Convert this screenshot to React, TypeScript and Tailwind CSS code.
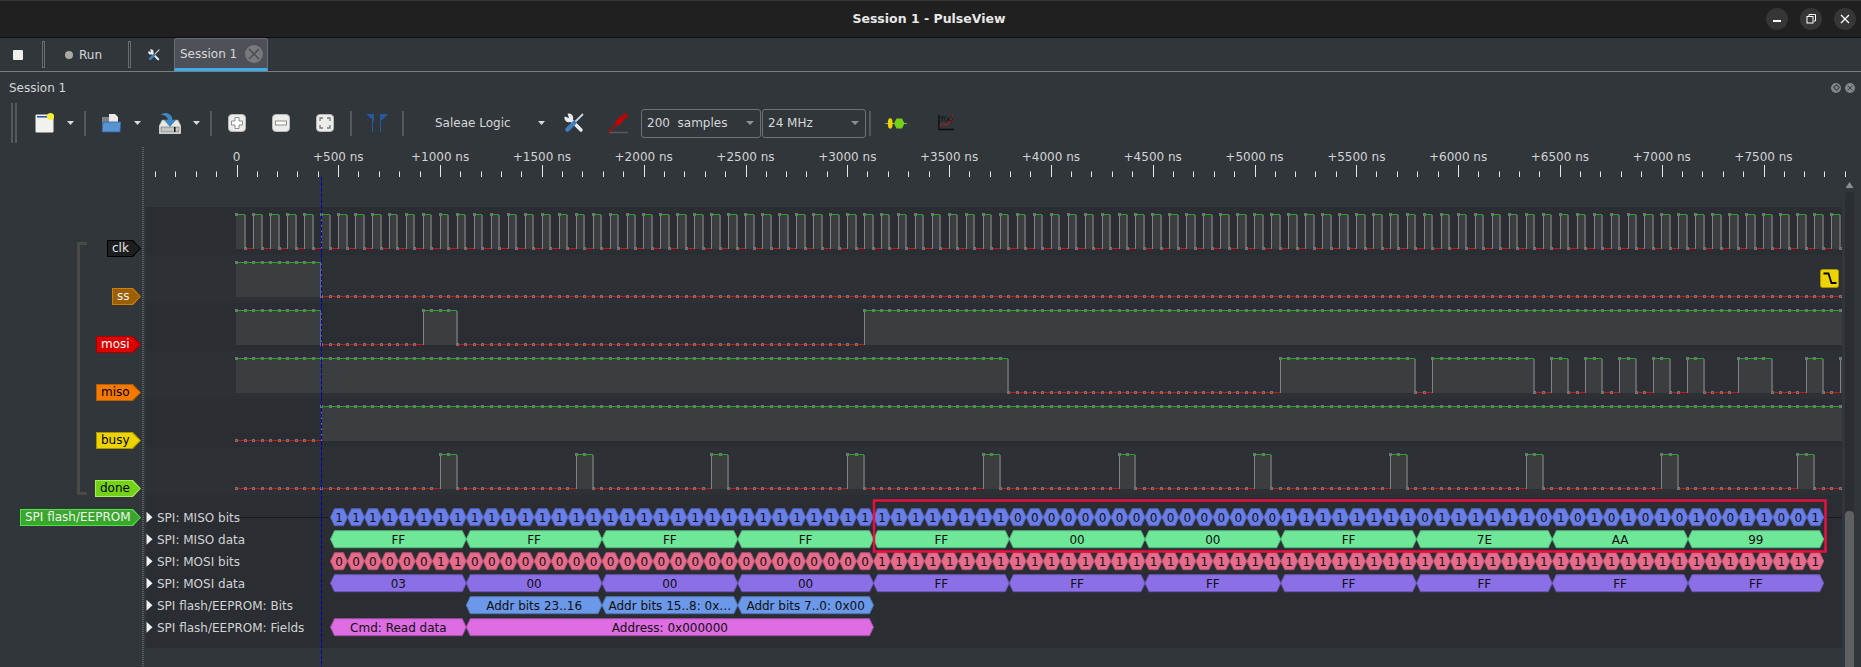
import React from 'react';

const SAMPLE = 8.483;
const X0 = 236.3;
const LAST = 189;
const LEFT = 146;
const RIGHT = 1842;

// each trace: first level and the samples where it flips
const pulses = (start: number, step: number, count: number, width: number) => {
  const out: number[] = [];
  for (let k = 0; k < count; k++) out.push(start + k * step, start + k * step + width);
  return out;
};

const traces: { high: number; start: boolean; flips: number[] }[] = [
  { high: 213.5, start: true, flips: Array.from({ length: 190 }, (_, i) => i + 1) },
  { high: 261.5, start: true, flips: [10] },
  { high: 309.5, start: true, flips: [10, 22, 26, 74] },
  { high: 357.5, start: true, flips: [91, 123, 139, 141, 153, 155, 157, 159, 161, 163, 165, 167, 169, 171, 173, 177, 181, 185, 187, 189] },
  { high: 405.5, start: false, flips: [10] },
  { high: 453.5, start: false, flips: pulses(24, 16, 11, 2) },
];

const sx = (i: number) => Math.min(Math.round(X0 + i * SAMPLE), RIGHT);

const Trace = ({ high, start, flips }: { high: number; start: boolean; flips: number[] }) => {
  const low = high + 34;
  const set = new Set(flips);
  let level = start;
  let green = '';
  let red = '';
  let rising = '';
  let falling = '';
  let fill = '';
  const dots: React.ReactNode[] = [];
  for (let i = 0; i <= LAST; i++) {
    if (set.has(i)) {
      level = !level;
      if (level) rising += `M${sx(i) + 0.5} ${high}V${low}`;
      else falling += `M${sx(i)} ${high}V${low}`;
    }
    const y = level ? high : low;
    const seg = `M${sx(i)} ${y}H${sx(i + 1)}`;
    if (level) {
      green += seg;
      fill += `M${sx(i)} ${high}H${sx(i + 1)}V${low}H${sx(i)}Z`;
    } else {
      red += seg;
    }
    dots.push(<rect key={i} x={sx(i) - 1} y={y - 1} width={2} height={2} fill="none" stroke="#727475" strokeWidth={1} />);
  }
  return (
    <g shapeRendering="crispEdges">
      <path d={fill} fill="#3a3e41" />
      <path d={green} stroke="#1fa81f" strokeWidth={1} fill="none" />
      <path d={red} stroke="#d01414" strokeWidth={1} fill="none" />
      <path d={rising} stroke="#808283" strokeWidth={1} fill="none" />
      <path d={falling} stroke="#636566" strokeWidth={2} fill="none" />
      {dots}
    </g>
  );
};

const BYTE = 135.75;
const START = 330.5;
const ROWS = [516.2, 538.2, 560.2, 582.2, 604.2, 626.2];

const Ann = ({ x, w, row, fill, stroke, text, inset = 4 }: { x: number; w: number; row: number; fill: string; stroke: string; text: string; inset?: number }) => {
  const y = ROWS[row];
  const pts = `${x},${y} ${x + inset},${y - 8.5} ${x + w - inset},${y - 8.5} ${x + w},${y} ${x + w - inset},${y + 8.5} ${x + inset},${y + 8.5}`;
  return (
    <g>
      <polygon points={pts} fill={fill} stroke={stroke} strokeWidth={1} />
      <text x={x + w / 2} y={y + 4.5} textAnchor="middle" fontSize={12} fill="#101010">{text}</text>
    </g>
  );
};

const misoBytes = ['FF', 'FF', 'FF', 'FF', 'FF', '00', '00', 'FF', '7E', 'AA', '99'];
const mosiBytes = ['03', '00', '00', '00', 'FF', 'FF', 'FF', 'FF', 'FF', 'FF', 'FF'];
const toBits = (hex: string) => parseInt(hex, 16).toString(2).padStart(8, '0').split('');

const rowNames = ['SPI: MISO bits', 'SPI: MISO data', 'SPI: MOSI bits', 'SPI: MOSI data', 'SPI flash/EEPROM: Bits', 'SPI flash/EEPROM: Fields'];

const TraceView = () => {
  const majors = Array.from({ length: 16 }, (_, k) => 236.5 + k * 101.8);
  const minors: number[] = [];
  for (let t = -4; t < 80; t++) if (t % 5 !== 0) minors.push(Math.round(236.3 + t * 20.36) + 0.5);
  return (
    <svg width={RIGHT - LEFT} height={521} viewBox={`${LEFT} 146 ${RIGHT - LEFT} 521`} className="block shrink-0 overflow-visible">
      {/* ruler */}
      {majors.map((x, k) => (
        <g key={k}>
          <text x={x} y={160} textAnchor="middle" fontSize={12} fill="#d2d3d4">{k === 0 ? '0' : `+${k * 500} ns`}</text>
          <path d={`M${Math.round(x) + 0.5} 164V176`} stroke="#e4e5e5" strokeWidth={1} />
        </g>
      ))}
      {minors.map((x) => <path key={x} d={`M${x} 170.5V176`} stroke="#e4e5e5" strokeWidth={1} />)}

      {/* row bands */}
      <rect x={LEFT} y={206} width={RIGHT - LEFT} height={441} fill="#2a2d32" />
      {[254, 350, 446].map((y) => <rect key={y} x={LEFT} y={y} width={RIGHT - LEFT} height={48} fill="#2d3136" />)}

      {traces.map((t) => <Trace key={t.high} {...t} />)}

      {/* decoder rows */}
      <path d={`M240 516.5H330M1824 516.5H${RIGHT}`} stroke="#1b1c1e" strokeWidth={1} />
      {rowNames.map((name, r) => (
        <g key={name}>
          <polygon points={`146.5,${ROWS[r] - 5.5} 152.5,${ROWS[r]} 146.5,${ROWS[r] + 5.5}`} fill="#f2f2f2" />
          <text x={157} y={ROWS[r] + 4.5} fontSize={12} fill="#d2d3d4">{name}</text>
        </g>
      ))}
      {misoBytes.map((b, i) => (
        <g key={i}>
          {toBits(b).map((bit, j) => (
            <Ann key={j} x={START + i * BYTE + (j * BYTE) / 8} w={BYTE / 8} row={0} fill="#6a7ee8" stroke="#5263b8" text={bit} />
          ))}
          <Ann x={START + i * BYTE} w={BYTE} row={1} fill="#6fe799" stroke="#55b478" text={b} />
        </g>
      ))}
      {mosiBytes.map((b, i) => (
        <g key={i}>
          {toBits(b).map((bit, j) => (
            <Ann key={j} x={START + i * BYTE + (j * BYTE) / 8} w={BYTE / 8} row={2} fill="#e76b8d" stroke="#b5526d" text={bit} />
          ))}
          <Ann x={START + i * BYTE} w={BYTE} row={3} fill="#8b6fe6" stroke="#6b55b4" text={b} />
        </g>
      ))}
      <Ann x={START + BYTE} w={BYTE} row={4} fill="#6b98e8" stroke="#5276b6" text="Addr bits 23..16" />
      <Ann x={START + 2 * BYTE} w={BYTE} row={4} fill="#6b98e8" stroke="#5276b6" text="Addr bits 15..8: 0x…" />
      <Ann x={START + 3 * BYTE} w={BYTE} row={4} fill="#6b98e8" stroke="#5276b6" text="Addr bits 7..0: 0x00" />
      <Ann x={START} w={BYTE} row={5} fill="#de6ce2" stroke="#a050a8" text="Cmd: Read data" />
      <Ann x={START + BYTE} w={BYTE * 3} row={5} fill="#de6ce2" stroke="#a050a8" text="Address: 0x000000" />

      {/* selection box */}
      <rect x={874} y={499.5} width={951.5} height={51} fill="none" stroke="#e8103f" strokeWidth={2.5} />

      {/* cursor */}
      <path d="M321.5 176V666" stroke="#0000c4" strokeWidth={1} strokeDasharray="4 1.5" />

      {/* trigger marker */}
      <rect x={1820.5} y={268.5} width={18} height={18} rx={2} fill="#edd400" stroke="#a89600" />
      <path d="M1823.5 272.5h5l3 9.5h5" stroke="#000" strokeWidth={1.8} fill="none" />
    </svg>
  );
};

const ChannelTag = ({ name, border, bg, text, width, h = 'h-[17px]' }: { name: string; border: string; bg: string; text: string; width: string; h?: string }) => (
  <div className={`${border} ${width} ${h} shrink-0 p-px [clip-path:polygon(0_0,calc(100%-8px)_0,100%_50%,calc(100%-8px)_100%,0_100%)]`}>
    <div className={`${bg} ${text} h-full pl-[4px] text-[12px] leading-[14px] whitespace-nowrap [clip-path:polygon(0_0,calc(100%-8px)_0,100%_50%,calc(100%-8px)_100%,0_100%)]`}>{name}</div>
  </div>
);

const Sep = ({ ml }: { ml: string }) => <div className={`${ml} w-[2px] h-[25px] bg-[#54585b] shrink-0`} />;
const Arrow = ({ ml }: { ml?: string }) => (
  <div className={`${ml ?? ''} w-[7px] h-[4px] shrink-0 bg-[#d8d9da] [clip-path:polygon(0_0,100%_0,50%_100%)]`} />
);

const NewIcon = () => (
  <svg width={19} height={20} viewBox="0 0 19 20" className="shrink-0">
    <rect x={0.5} y={1.5} width={18} height={18} rx={1} fill="#f1f1ee" />
    <rect x={2} y={3} width={12} height={1.6} fill="#2a5aa0" />
    <circle cx={15.5} cy={3.5} r={3.5} fill="#f6ee30" />
  </svg>
);

const OpenIcon = () => (
  <svg width={20} height={20} viewBox="0 0 20 20" className="shrink-0">
    <path d="M1 4h7v14H1z" fill="#7d8288" />
    <path d="M8 1h6l3 3v7H8z" fill="#e9e9e9" />
    <path d="M2 9h18l-1 10H1z" fill="#5a94d0" stroke="#2c5f9e" strokeWidth={0.8} />
  </svg>
);

const SaveIcon = () => (
  <svg width={22} height={22} viewBox="0 0 22 22" className="shrink-0">
    <path d="M3 8h16l3 6v8H0v-8z" fill="#e8e8e6" stroke="#8a8a88" strokeWidth={0.6} />
    <rect x={2} y={15} width={18} height={5} fill="#c4c4c2" stroke="#555" strokeWidth={0.5} />
    <rect x={15} y={15} width={1.5} height={5} fill="#111" />
    <path d="M1 3c4-3 9-3 12 2v3h4l-6 7-6-7h4c0-3-5-6-8-5z" fill="#3f87c2" />
  </svg>
);

const ZoomBtn = ({ children }: { children: React.ReactNode }) => (
  <svg width={18} height={18} viewBox="0 0 18 18" className="shrink-0">
    <rect x={0.5} y={0.5} width={17} height={17} rx={3.5} fill="#ececea" stroke="#b8b8b6" />
    {children}
  </svg>
);

const FlagsIcon = () => (
  <svg width={22} height={18} viewBox="0 0 22 18" className="shrink-0">
    <path d="M0 0h8v8l-1 -.7V18H6V5z" fill="#2458a4" />
    <path d="M22 0h-8v18h1V7z" fill="#2458a4" />
  </svg>
);

const ToolsIcon = ({ size = 20 }: { size?: number }) => (
  <svg width={size} height={size} viewBox="0 0 20 20" className="shrink-0">
    <path d="M6 6L17 17" stroke="#e8ecef" strokeWidth={3.4} strokeLinecap="round" />
    <circle cx={4.8} cy={4.8} r={4.4} fill="#e8ecef" />
    <path d="M5 5L3 -1H-1V3z" fill="#31363b" />
    <path d="M18.5 1.5L11.5 8.5" stroke="#c8d4de" strokeWidth={1.8} strokeLinecap="round" />
    <path d="M10 10L3.5 16.5" stroke="#3f7fc0" strokeWidth={4.5} strokeLinecap="round" />
  </svg>
);

const ProbeIcon = () => (
  <svg width={20} height={21} viewBox="0 0 20 21" className="shrink-0">
    <path d="M1 19.5H20" stroke="#55595c" strokeWidth={1.6} />
    <path d="M0.5 19.5L9 10.5" stroke="#c00000" strokeWidth={1.4} />
    <path d="M8.5 11L15 4.5" stroke="#cc0000" strokeWidth={5} />
    <path d="M14 2L17 0l3 3-2 3z" fill="#cc0000" />
  </svg>
);

const DecoderIcon = () => (
  <svg width={22} height={11} viewBox="0 0 22 11" className="shrink-0">
    <path d="M0 5.5h22" stroke="#b0b0b0" strokeWidth={0.8} />
    <ellipse cx={5.2} cy={5.5} rx={2.4} ry={5.2} fill="#edd400" />
    <polygon points="9,5.5 11.5,0.5 17,0.5 19.5,5.5 17,10.5 11.5,10.5" fill="#73d216" />
  </svg>
);

const MathIcon = () => (
  <svg width={18} height={18} viewBox="0 0 18 18" className="shrink-0">
    <path d="M2 1V15.5H17" stroke="#0d0d0d" strokeWidth={1.4} fill="none" />
    <path d="M2.5 12.5c3-6 5 0 8-2s4-5 5-10" stroke="#a82020" strokeWidth={1.1} fill="none" />
    <text x={4} y={7} fontSize={7} fill="#0d0d0d">f(x)</text>
  </svg>
);

const Combo = ({ label, width }: { label: string; width: string }) => (
  <div className={`${width} h-[29px] shrink-0 flex items-center justify-between pl-[5px] pr-[6px] border border-[#6e7276] rounded-[3px] text-[12px] text-[#d6d7d8] whitespace-pre`}>
    <span>{label}</span>
    <div className="w-[8px] h-[4px] bg-[#8f9294] [clip-path:polygon(0_0,100%_0,50%_100%)]" />
  </div>
);

const TabHandle = ({ ml }: { ml: string }) => <div className={`${ml} w-[3px] h-[27px] border border-[#6a6e71] shrink-0`} />;

export default function App() {
  return (
    <div className="w-[1861px] h-[667px] overflow-hidden flex flex-col bg-[#31363b] text-[#d6d7d8] text-[12px] [font-family:'DejaVu_Sans',sans-serif]">
      {/* title bar */}
      <div className="h-[38px] shrink-0 flex items-center bg-[#202020] border-t border-t-[#353535] border-b border-b-[#0d0d0d] pr-[5px]">
        <div className="flex-1 pl-[92px] text-center text-[12.5px] font-bold text-[#e8e8e8]">Session 1 - PulseView</div>
        <div className="flex gap-[12px]">
          <div className="w-[22px] h-[22px] rounded-full bg-[#363636] flex items-center justify-center">
            <div className="w-[8px] h-[2px] bg-white mt-[4px]" />
          </div>
          <div className="w-[22px] h-[22px] rounded-full bg-[#363636] flex items-center justify-center">
            <svg width={10} height={10} viewBox="0 0 10 10">
              <path d="M3 2V.5h6.5V7H8" stroke="#fff" fill="none" />
              <rect x={1} y={2.5} width={6} height={6.5} stroke="#fff" fill="none" />
            </svg>
          </div>
          <div className="w-[22px] h-[22px] rounded-full bg-[#363636] flex items-center justify-center">
            <svg width={10} height={10} viewBox="0 0 10 10">
              <path d="M1 1l8 8M9 1l-8 8" stroke="#fff" strokeWidth={1.3} />
            </svg>
          </div>
        </div>
      </div>

      {/* main toolbar with tab */}
      <div className="h-[34px] shrink-0 flex items-center border-b border-b-[#7b7e80]">
        <div className="ml-[13px] w-[10px] h-[10px] bg-[#efefec] rounded-[1px] shrink-0" />
        <TabHandle ml="ml-[19px]" />
        <div className="ml-[20px] w-[8px] h-[8px] rounded-full bg-[#a9aaa4] shrink-0" />
        <span className="ml-[6px] w-[25px]">Run</span>
        <TabHandle ml="ml-[24px]" />
        <div className="ml-[17px] shrink-0"><ToolsIcon size={12} /></div>
        <div className="ml-[14px] h-[33px] self-end w-[94px] shrink-0 flex items-center bg-[#4d5157] border border-[#6a6e72] border-b-[3px] border-b-[#3daee9] rounded-t-[3px] pl-[5px] text-[#d8d9da]">
          <span>Session 1</span>
          <div className="ml-[8px] w-[18px] h-[18px] rounded-full bg-[#777a7c] flex items-center justify-center">
            <svg width={12} height={12} viewBox="0 0 12 12">
              <path d="M1 1l10 10M11 1L1 11" stroke="#45484b" strokeWidth={1.3} />
            </svg>
          </div>
        </div>
      </div>

      {/* dock title */}
      <div className="h-[31px] shrink-0 flex items-center justify-between pl-[9px] pr-[6px]">
        <span>Session 1</span>
        <div className="flex gap-[4px]">
          <div className="w-[10px] h-[10px] rounded-full bg-[#83868a] flex items-center justify-center">
            <div className="w-[5px] h-[5px] rotate-45 border border-[#3a3e42]" />
          </div>
          <div className="w-[10px] h-[10px] rounded-full bg-[#83868a] flex items-center justify-center">
            <svg width={6} height={6} viewBox="0 0 6 6">
              <path d="M.5.5l5 5M5.5.5l-5 5" stroke="#3a3e42" />
            </svg>
          </div>
        </div>
      </div>

      {/* session toolbar */}
      <div className="h-[44px] shrink-0 pb-[4px] flex items-center pl-[11px]">
        <div className="w-[2px] h-[40px] bg-[#54585b] shrink-0" />
        <div className="ml-[2px] w-[2px] h-[40px] bg-[#54585b] shrink-0" />
        <div className="ml-[18px] shrink-0"><NewIcon /></div>
        <Arrow ml="ml-[13px]" />
        <Sep ml="ml-[10px]" />
        <div className="ml-[15px]"><OpenIcon /></div>
        <Arrow ml="ml-[13px]" />
        <div className="ml-[18px]"><SaveIcon /></div>
        <Arrow ml="ml-[12px]" />
        <Sep ml="ml-[10px]" />
        <div className="ml-[16px]">
          <ZoomBtn><path d="M7 3.5h4v3.5h3.5v4H11v3.5H7V11H3.5V7H7z" fill="#fff" stroke="#777" strokeWidth={0.8} /></ZoomBtn>
        </div>
        <div className="ml-[26px]">
          <ZoomBtn><rect x={3.5} y={7} width={11} height={4} fill="#fff" stroke="#777" strokeWidth={0.8} /></ZoomBtn>
        </div>
        <div className="ml-[26px]">
          <ZoomBtn><path d="M4 7V4h3M11 4h3v3M14 11v3h-3M7 14H4v-3" stroke="#777" strokeWidth={1.3} fill="none" /></ZoomBtn>
        </div>
        <Sep ml="ml-[16px]" />
        <div className="ml-[14px]"><FlagsIcon /></div>
        <Sep ml="ml-[14px]" />
        <span className="ml-[31px] w-[103px] shrink-0">Saleae Logic</span>
        <Arrow />
        <div className="ml-[19px]"><ToolsIcon /></div>
        <div className="ml-[24px]"><ProbeIcon /></div>
        <div className="ml-[13px]"><Combo label="200  samples" width="w-[120px]" /></div>
        <div className="ml-[1px]"><Combo label="24 MHz" width="w-[104px]" /></div>
        <Sep ml="ml-[3px]" />
        <div className="ml-[14px]"><DecoderIcon /></div>
        <div className="ml-[30px]"><MathIcon /></div>
      </div>

      {/* trace area */}
      <div className="flex-1 min-h-0 flex">
        <div className="w-[142px] shrink-0 flex flex-col pt-[93px] pr-px">
          <div className="flex">
            <div className="ml-[77px] mt-[2px] w-[10px] h-[253px] shrink-0 border-l-[3px] border-y-[3px] border-[#4a4b47] rounded-l-[2px]" />
            <div className="flex-1 flex flex-col items-end gap-[31px]">
              <ChannelTag name="clk" border="bg-black" bg="bg-[#1c1e20]" text="text-[#e8e8e8]" width="w-[34px]" />
              <ChannelTag name="ss" border="bg-[#d07f00]" bg="bg-[#9c5f04]" text="text-[#f0f0f0]" width="w-[29px]" />
              <ChannelTag name="mosi" border="bg-[#a40000]" bg="bg-[#dc0000]" text="text-white" width="w-[45px]" />
              <ChannelTag name="miso" border="bg-[#b55f00]" bg="bg-[#f57900]" text="text-black" width="w-[45px]" />
              <ChannelTag name="busy" border="bg-[#a89600]" bg="bg-[#edd400]" text="text-black" width="w-[45px]" />
              <ChannelTag name="done" border="bg-[#a6ec5c]" bg="bg-[#73d216]" text="text-black" width="w-[46px]" />
            </div>
          </div>
          <div className="mt-[12px] self-end">
            <ChannelTag name="SPI flash/EEPROM" border="bg-[#55e04a]" bg="bg-[#39a62d]" text="text-[#eef5ec]" width="w-[121px]" />
          </div>
        </div>
        <div className="w-[2px] shrink-0 [background-image:repeating-linear-gradient(to_bottom,#5c6064_0,#5c6064_1px,transparent_1px,transparent_2px)]" />
        <div className="w-[2px] shrink-0" />
        <TraceView />
        <div className="w-[19px] shrink-0 flex flex-col pl-[3px] pt-[35px]">
          <div className="ml-[0.5px] w-[8px] h-[6px] bg-[#8b8e90] [clip-path:polygon(50%_0,100%_100%,0_100%)]" />
          <div className="mt-[4px] flex-1 w-[9px] rounded-t-[4px] bg-[#2a2d31] flex flex-col justify-end">
            <div className="h-[156px] rounded-t-[4px] bg-[#5e6061]" />
          </div>
        </div>
      </div>
    </div>
  );
}
